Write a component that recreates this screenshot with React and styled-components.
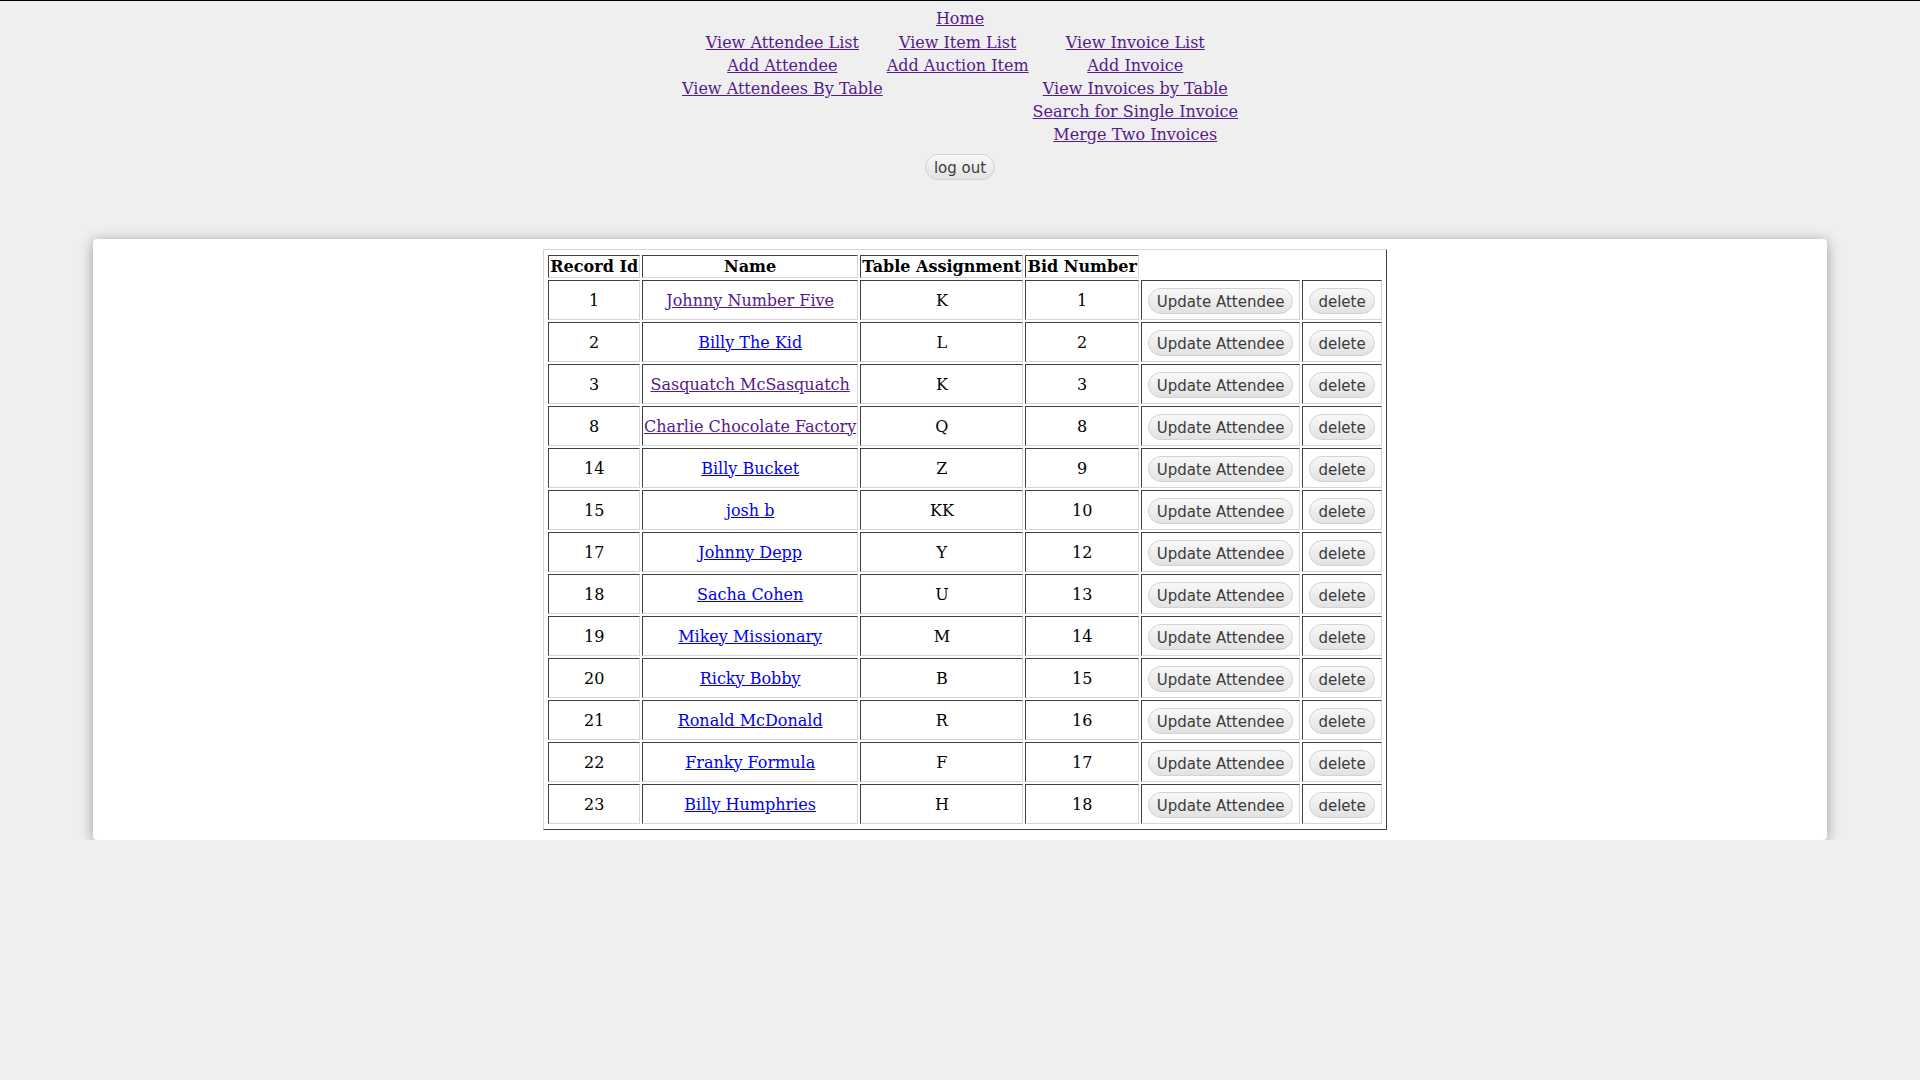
import React from 'react';
import styled, { createGlobalStyle } from 'styled-components';

const GlobalStyle = createGlobalStyle`
  html {
    background: #efefef;
    border-top: 1px solid #000;
  }
  body {
    margin: 8px;
    font-family: "DejaVu Serif", serif;
    font-size: 16px;
    color: #000;
  }
`;

const NavLink = styled.a`
  color: ${(p) => (p.$visited ? '#551a8b' : '#0000ee')};
  text-decoration: underline;
  cursor: pointer;
`;

const HomeRow = styled.div`
  text-align: center;
  line-height: 19px;
`;

const NavTable = styled.table`
  margin: 2px auto 0;
  border-spacing: 2px;

  td {
    padding: 1px;
    text-align: center;
    vertical-align: middle;
    line-height: 19px;
  }
`;

const LogoutRow = styled.div`
  text-align: center;
  margin-top: 7px;
`;

const PillButton = styled.button`
  font-family: "DejaVu Sans", sans-serif;
  font-size: 15px;
  color: #3c3c3c;
  height: 26px;
  padding: 2px 8px 0;
  border: 1px solid #d2d2d2;
  border-radius: 13px;
  background: linear-gradient(#f8f8f8, #e2e2e2);
  cursor: pointer;
`;

const CellButton = styled(PillButton)`
  display: block;
  margin: 6px 5px 4px;
  white-space: nowrap;
`;

const Panel = styled.div`
  margin: 59px 85px 0;
  padding: 10px 0 10px 10px;
  background: #fff;
  border-radius: 4px;
  box-shadow: 0 2px 14px rgba(0, 0, 0, 0.35);
`;

const RecordTable = styled.table`
  margin: 0 auto;
  padding: 3px 2px;
  border: 1px solid;
  border-color: #d6d6d6 #404040 #404040 #d6d6d6;
  border-spacing: 2px;

  th, td {
    padding: 1px;
    border: 1px solid;
    border-color: #404040 #d6d6d6 #d6d6d6 #404040;
    text-align: center;
    vertical-align: middle;
    line-height: 19px;
    white-space: nowrap;
  }

  th {
    font-weight: bold;
  }
`;

const attendees = [
  { id: 1, name: 'Johnny Number Five', table: 'K', bid: 1, visited: true },
  { id: 2, name: 'Billy The Kid', table: 'L', bid: 2 },
  { id: 3, name: 'Sasquatch McSasquatch', table: 'K', bid: 3, visited: true },
  { id: 8, name: 'Charlie Chocolate Factory', table: 'Q', bid: 8, visited: true },
  { id: 14, name: 'Billy Bucket', table: 'Z', bid: 9 },
  { id: 15, name: 'josh b', table: 'KK', bid: 10 },
  { id: 17, name: 'Johnny Depp', table: 'Y', bid: 12 },
  { id: 18, name: 'Sacha Cohen', table: 'U', bid: 13 },
  { id: 19, name: 'Mikey Missionary', table: 'M', bid: 14 },
  { id: 20, name: 'Ricky Bobby', table: 'B', bid: 15 },
  { id: 21, name: 'Ronald McDonald', table: 'R', bid: 16 },
  { id: 22, name: 'Franky Formula', table: 'F', bid: 17 },
  { id: 23, name: 'Billy Humphries', table: 'H', bid: 18 },
];

const navRows = [
  ['View Attendee List', 'View Item List', 'View Invoice List'],
  ['Add Attendee', 'Add Auction Item', 'Add Invoice'],
  ['View Attendees By Table', '', 'View Invoices by Table'],
  ['', '', 'Search for Single Invoice'],
  ['', '', 'Merge Two Invoices'],
];

export default function App() {
  return (
    <>
      <GlobalStyle />
      <HomeRow>
        <NavLink $visited>Home</NavLink>
      </HomeRow>
      <NavTable>
        <tbody>
          {navRows.map((row, i) => (
            <tr key={i}>
              {row.map((label, j) => (
                <td key={j}>{label && <NavLink $visited>{label}</NavLink>}</td>
              ))}
            </tr>
          ))}
        </tbody>
      </NavTable>
      <LogoutRow>
        <PillButton>log out</PillButton>
      </LogoutRow>
      <Panel>
        <RecordTable>
          <tbody>
            <tr>
              <th>Record Id</th>
              <th>Name</th>
              <th>Table Assignment</th>
              <th>Bid Number</th>
            </tr>
            {attendees.map((a) => (
              <tr key={a.id}>
                <td>{a.id}</td>
                <td>
                  <NavLink $visited={a.visited}>{a.name}</NavLink>
                </td>
                <td>{a.table}</td>
                <td>{a.bid}</td>
                <td>
                  <CellButton>Update Attendee</CellButton>
                </td>
                <td>
                  <CellButton>delete</CellButton>
                </td>
              </tr>
            ))}
          </tbody>
        </RecordTable>
      </Panel>
    </>
  );
}
